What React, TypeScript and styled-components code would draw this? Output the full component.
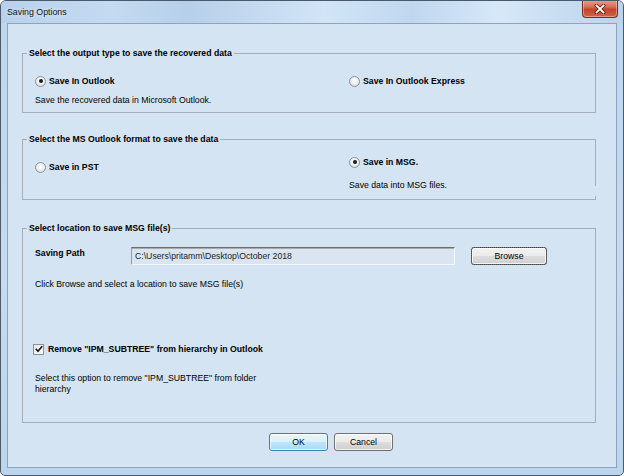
import React from "react";
import styled, { createGlobalStyle } from "styled-components";

const Global = createGlobalStyle`
  html, body { margin: 0; padding: 0; background: #ffffff; }
  body { font-family: "Liberation Sans", Arial, sans-serif; color: #000; }
  * { box-sizing: border-box; }
`;

const Window = styled.div`
  width: 624px;
  height: 476px;
  border: 1px solid #4b5a6b;
  border-radius: 6px 6px 5px 5px;
  background: linear-gradient(180deg, #bfd6ef 0%, #c6dbf1 60%, #bdd4ed 100%);
  display: flex;
  flex-direction: column;
  overflow: hidden;
`;

const TitleBar = styled.div`
  height: 22px;
  flex: none;
  display: flex;
  justify-content: space-between;
  align-items: flex-start;
  padding-left: 6px;
  background: linear-gradient(
    90deg,
    #b9d1eb 0%,
    #c4daf1 18%,
    #b7cfe9 30%,
    #d2e5f7 52%,
    #c0d7ef 66%,
    #d6e8f8 80%,
    #bcd3ec 100%
  );
`;

const Title = styled.span`
  font-size: 8.8px;
  line-height: 22px;
  color: #101010;
  text-shadow: 0 0 4px rgba(255, 255, 255, 0.9);
`;

const CloseButton = styled.div`
  width: 36px;
  height: 18px;
  margin-right: 5px;
  margin-top: -1px;
  border: 1px solid #7a2b20;
  border-top: none;
  border-radius: 0 0 4px 4px;
  background: linear-gradient(180deg, #e6a190 0%, #d6705b 40%, #c4432b 55%, #cf684c 100%);
  box-shadow: inset 0 0 0 1px rgba(255, 210, 200, 0.45);
  display: flex;
  align-items: center;
  justify-content: center;
`;

const Client = styled.div`
  flex: 1;
  margin: 0 6px 7px 6px;
  border: 1px solid #8ea4bd;
  background: #d5e4f3;
  padding: 23px 20px 0 14px;
  display: flex;
  flex-direction: column;
`;

const GroupBox = styled.fieldset<{ $h: number; $mt: number; $notch?: boolean }>`
  position: relative;
  margin: ${(p) => p.$mt}px 0 0 0;
  padding: 0;
  height: ${(p) => p.$h}px;
  min-width: 0;
  border: 1px solid #a6adb5;
  border-radius: 0;
  &::after {
    content: "";
    display: ${(p) => (p.$notch ? "block" : "none")};
    position: absolute;
    right: -2px;
    top: 41px;
    width: 3px;
    height: 10px;
    background: #d5e4f3;
  }
`;

const Caption = styled.legend`
  margin-left: 4px;
  padding: 0 2px;
  font-size: 8.7px;
  font-weight: bold;
  line-height: 12px;
`;

const Columns = styled.div`
  display: grid;
  grid-template-columns: 314px 1fr;
  padding-left: 12px;
`;

const Column = styled.div<{ $pt: number }>`
  display: flex;
  flex-direction: column;
  padding-top: ${(p) => p.$pt}px;
`;

const OptionRow = styled.div<{ $mt?: number }>`
  display: flex;
  align-items: center;
  gap: 3px;
  height: 12px;
  margin-top: ${(p) => p.$mt ?? 0}px;
  font-size: 8.7px;
  font-weight: bold;
`;

const RadioDot = styled.span<{ $on?: boolean }>`
  width: 11px;
  height: 11px;
  border-radius: 50%;
  border: 1px solid #8d9299;
  background: radial-gradient(circle at 50% 40%, #ffffff 0%, #eef0f2 45%, #cfd3d8 100%);
  display: flex;
  align-items: center;
  justify-content: center;
  &::after {
    content: "";
    width: 4px;
    height: 4px;
    border-radius: 50%;
    background: #1b1b1b;
    display: ${(p) => (p.$on ? "block" : "none")};
  }
`;

const CheckBox = styled.span`
  width: 11px;
  height: 11px;
  margin-left: -2px;
  margin-right: 1px;
  border: 1px solid #8d9299;
  background: linear-gradient(135deg, #e4e7ea, #ffffff);
  display: flex;
  align-items: center;
  justify-content: center;
`;

const Desc = styled.div<{ $mt: number; $w?: number }>`
  margin-top: ${(p) => p.$mt}px;
  font-size: 8.7px;
  line-height: 11px;
  max-width: ${(p) => (p.$w ? `${p.$w}px` : "none")};
`;

const GroupInner = styled.div`
  display: flex;
  flex-direction: column;
  padding: 13px 0 0 12px;
`;

const PathRow = styled.div`
  display: flex;
  align-items: flex-start;
  height: 18px;
`;

const PathLabel = styled.div`
  width: 96px;
  font-size: 8.7px;
  font-weight: bold;
  line-height: 12px;
`;

const PathInput = styled.div`
  width: 324px;
  height: 18px;
  border-top: 1px solid #6e6e6e;
  border-left: 1px solid #9a9a9a;
  border-right: 1px solid #f3f7fb;
  border-bottom: 1px solid #f3f7fb;
  box-shadow: inset 0 1px 0 #a9a9a9;
  background: #d9e5f1;
  font-size: 8.7px;
  line-height: 16px;
  padding-left: 3px;
  color: #222;
`;

const PushButton = styled.div<{ $primary?: boolean; $focus?: boolean; $w: number; $ml?: number }>`
  width: ${(p) => p.$w}px;
  height: 18px;
  margin-left: ${(p) => p.$ml ?? 0}px;
  border: 1px solid ${(p) => (p.$primary ? "#3c7fb1" : "#707070")};
  border-radius: 3px;
  background: ${(p) =>
    p.$primary
      ? "linear-gradient(180deg, #eaf6fd 0%, #d9f0fc 50%, #bee6fd 51%, #a7d9f5 100%)"
      : "linear-gradient(180deg, #f2f2f2 0%, #ebebeb 50%, #dddddd 51%, #cfcfcf 100%)"};
  box-shadow: inset 0 0 0 1px rgba(255, 255, 255, 0.75);
  outline: ${(p) => (p.$focus ? "1px dotted #444" : "none")};
  outline-offset: -1px;
  font-size: 8.7px;
  line-height: 16px;
  text-align: center;
  color: #000;
`;

const ButtonBar = styled.div`
  display: flex;
  gap: 6px;
  margin-top: 10px;
  padding-left: 247px;
`;

export default function App() {
  return (
    <>
      <Global />
      <Window>
        <TitleBar>
          <Title>Saving Options</Title>
          <CloseButton>
            <svg width="12" height="10" viewBox="0 0 12 10">
              <path d="M2.5 1.5 L9.5 8.5 M9.5 1.5 L2.5 8.5" stroke="#5a1a12" strokeWidth="3.4" strokeLinecap="square" fill="none" />
              <path d="M2.5 1.5 L9.5 8.5 M9.5 1.5 L2.5 8.5" stroke="#ffffff" strokeWidth="1.8" strokeLinecap="square" fill="none" />
            </svg>
          </CloseButton>
        </TitleBar>
        <Client>
          <GroupBox $h={66} $mt={0}>
            <Caption>Select the output type to save the recovered data</Caption>
            <Columns>
              <Column $pt={16}>
                <OptionRow>
                  <RadioDot $on />
                  Save In Outlook
                </OptionRow>
                <Desc $mt={8}>Save the recovered data in Microsoft Outlook.</Desc>
              </Column>
              <Column $pt={16}>
                <OptionRow>
                  <RadioDot />
                  Save In Outlook Express
                </OptionRow>
              </Column>
            </Columns>
          </GroupBox>

          <GroupBox $h={67} $mt={20} $notch>
            <Caption>Select the MS Outlook format to save the data</Caption>
            <Columns>
              <Column $pt={16}>
                <OptionRow>
                  <RadioDot />
                  Save in PST
                </OptionRow>
              </Column>
              <Column $pt={11}>
                <OptionRow>
                  <RadioDot $on />
                  Save in MSG.
                </OptionRow>
                <Desc $mt={12}>Save data into MSG files.</Desc>
              </Column>
            </Columns>
          </GroupBox>

          <GroupBox $h={201} $mt={22}>
            <Caption>Select location to save MSG file(s)</Caption>
            <GroupInner>
              <PathRow>
                <PathLabel>Saving Path</PathLabel>
                <PathInput>C:\Users\pritamm\Desktop\October 2018</PathInput>
                <PushButton $w={76} $ml={16} $focus>
                  Browse
                </PushButton>
              </PathRow>
              <Desc $mt={14}>Click Browse and select a location to save MSG file(s)</Desc>
              <OptionRow $mt={53}>
                <CheckBox>
                  <svg width="8" height="8" viewBox="0 0 8 8">
                    <path d="M0.8 3.8 L3 6.2 L7.2 1.2" stroke="#1b1b1b" strokeWidth="1.7" fill="none" />
                  </svg>
                </CheckBox>
                Remove "IPM_SUBTREE" from hierarchy in Outlook
              </OptionRow>
              <Desc $mt={18} $w={230}>
                Select this option to remove "IPM_SUBTREE" from folder hierarchy
              </Desc>
            </GroupInner>
          </GroupBox>

          <ButtonBar>
            <PushButton $w={59} $primary>
              OK
            </PushButton>
            <PushButton $w={59}>Cancel</PushButton>
          </ButtonBar>
        </Client>
      </Window>
    </>
  );
}
